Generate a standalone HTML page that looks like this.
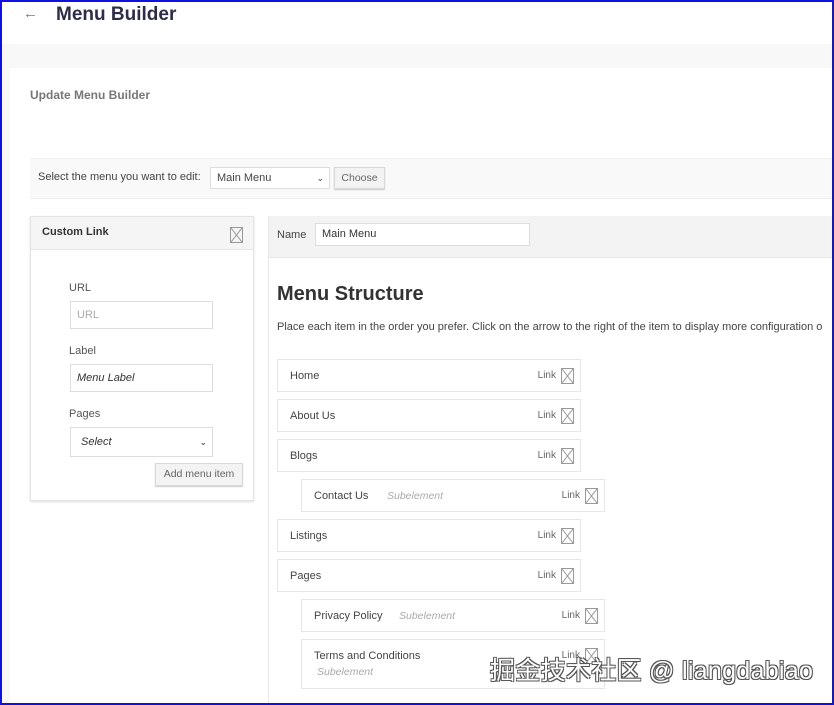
<!DOCTYPE html>
<html><head><meta charset="utf-8"><style>
*{box-sizing:border-box;margin:0;padding:0}
body{width:834px;height:705px;overflow:hidden;background:#fff;font-family:"Liberation Sans",sans-serif;color:#333;position:relative}
.a{position:absolute}
.frame{position:absolute;left:0;top:0;width:834px;height:705px;border:2px solid #1010e0;border-right-color:#1a1aa8;pointer-events:none;z-index:10}
.x{position:absolute;width:13px;height:16px;border:1px solid #999}
.x svg{position:absolute;left:0;top:0}
.item{position:absolute;height:33px;border:1px solid #e6e6e6;background:#fff;font-size:11px;color:#444}
.item .t{position:absolute;left:12px;top:10px}
.item .s{position:absolute;top:10px;font-style:italic;color:#aaa;font-size:10.5px}
.item .l{position:absolute;right:24px;top:10px;font-size:10px;color:#666}
.item .x{right:6px;top:8px}
input,.in{position:absolute;border:1px solid #ddd;background:#fff;font-size:11px;padding-left:6px;line-height:26px}
.btn{position:absolute;border:1px solid #d8d8d8;background:#f3f3f3;font-size:10.5px;color:#666;text-align:center;box-shadow:0 1px 1px #ccc}
</style></head><body>
<div class="frame"></div>
<div class="a" style="left:0;top:44px;width:834px;height:24px;background:#f8f8f8"></div>
<div class="a" style="left:0;top:68px;width:10px;height:637px;background:#f8f8f8"></div>
<div class="a" style="left:23px;top:5px;color:#6b6bd6;font-size:15px;font-weight:bold">&#8592;</div>
<div class="a" style="left:56px;top:4px;font-size:19px;font-weight:bold;color:#2d2d4a">Menu Builder</div>
<div class="a" style="left:30px;top:88px;font-size:12px;font-weight:bold;color:#777">Update Menu Builder</div>

<div class="a" style="left:30px;top:158px;width:804px;height:41px;background:#f9f9f9;border-top:1px solid #eee;border-bottom:1px solid #eee"></div>
<div class="a" style="left:38px;top:171px;font-size:11px;color:#444">Select the menu you want to edit:</div>
<div class="in" style="left:210px;top:167px;width:120px;height:22px;line-height:20px;color:#444">Main Menu<span style="position:absolute;right:5px;font-size:9px">&#8964;</span></div>
<div class="btn" style="left:334px;top:167px;width:51px;height:22px;line-height:20px">Choose</div>

<div class="a" style="left:30px;top:216px;width:224px;height:285px;border:1px solid #e4e4e4;box-shadow:0 1px 2px #ddd"></div>
<div class="a" style="left:31px;top:217px;width:222px;height:33px;background:#f5f5f5;border-bottom:1px solid #e6e6e6"></div>
<div class="a" style="left:42px;top:226px;font-size:11px;font-weight:bold;color:#333">Custom Link</div>
<div class="x" style="left:230px;top:227px"><svg width="11" height="14"><path d="M0 0L11 14M11 0L0 14" stroke="#999" stroke-width="1"/></svg></div>
<div class="a" style="left:69px;top:282px;font-size:11px;color:#555">URL</div>
<div class="in" style="left:70px;top:301px;width:143px;height:28px;color:#aaa">URL</div>
<div class="a" style="left:69px;top:345px;font-size:11px;color:#555">Label</div>
<div class="in" style="left:70px;top:364px;width:143px;height:28px;font-style:italic;color:#333">Menu Label</div>
<div class="a" style="left:69px;top:408px;font-size:11px;color:#555">Pages</div>
<div class="in" style="left:70px;top:427px;width:143px;height:30px;font-style:italic;color:#333;padding-left:10px;line-height:28px">Select<span style="position:absolute;right:5px;font-style:normal;font-size:9px">&#8964;</span></div>
<div class="btn" style="left:155px;top:463px;width:88px;height:23px;line-height:21px">Add menu item</div>

<div class="a" style="left:268px;top:216px;width:566px;height:489px;border-left:1px solid #e8e8e8"></div>
<div class="a" style="left:269px;top:216px;width:565px;height:42px;background:#f3f3f3;border-bottom:1px solid #e6e6e6"></div>
<div class="a" style="left:277px;top:229px;font-size:11px;color:#444">Name</div>
<div class="in" style="left:315px;top:223px;width:215px;height:23px;line-height:21px;color:#333">Main Menu</div>
<div class="a" style="left:277px;top:283px;font-size:20px;font-weight:bold;color:#333">Menu Structure</div>
<div class="a" style="left:277px;top:321px;font-size:11px;color:#444;white-space:nowrap">Place each item in the order you prefer. Click on the arrow to the right of the item to display more configuration o</div>

<div class="item" style="left:277px;top:359px;width:304px"><span class="t">Home</span><span class="l">Link</span><span class="x"><svg width="11" height="14"><path d="M0 0L11 14M11 0L0 14" stroke="#999"/></svg></span></div>
<div class="item" style="left:277px;top:399px;width:304px"><span class="t">About Us</span><span class="l">Link</span><span class="x"><svg width="11" height="14"><path d="M0 0L11 14M11 0L0 14" stroke="#999"/></svg></span></div>
<div class="item" style="left:277px;top:439px;width:304px"><span class="t">Blogs</span><span class="l">Link</span><span class="x"><svg width="11" height="14"><path d="M0 0L11 14M11 0L0 14" stroke="#999"/></svg></span></div>
<div class="item" style="left:301px;top:479px;width:304px"><span class="t">Contact Us</span><span class="s" style="left:85px">Subelement</span><span class="l">Link</span><span class="x"><svg width="11" height="14"><path d="M0 0L11 14M11 0L0 14" stroke="#999"/></svg></span></div>
<div class="item" style="left:277px;top:519px;width:304px"><span class="t">Listings</span><span class="l">Link</span><span class="x"><svg width="11" height="14"><path d="M0 0L11 14M11 0L0 14" stroke="#999"/></svg></span></div>
<div class="item" style="left:277px;top:559px;width:304px"><span class="t">Pages</span><span class="l">Link</span><span class="x"><svg width="11" height="14"><path d="M0 0L11 14M11 0L0 14" stroke="#999"/></svg></span></div>
<div class="item" style="left:301px;top:599px;width:304px"><span class="t">Privacy Policy</span><span class="s" style="left:97px">Subelement</span><span class="l">Link</span><span class="x"><svg width="11" height="14"><path d="M0 0L11 14M11 0L0 14" stroke="#999"/></svg></span></div>
<div class="item" style="left:301px;top:639px;width:304px;height:50px"><span class="t">Terms and Conditions</span><span class="s" style="left:15px;top:26px">Subelement</span><span class="l">Link</span><span class="x"><svg width="11" height="14"><path d="M0 0L11 14M11 0L0 14" stroke="#999"/></svg></span></div>

<div class="a" style="left:490px;top:651px;font-size:25px;letter-spacing:0.3px;color:#fff;white-space:nowrap;font-family:'Liberation Sans','Noto Sans CJK SC',sans-serif;text-shadow:-1px -1px 0 #555,1px -1px 0 #555,-1px 1px 0 #555,1px 1px 0 #555;z-index:5">掘金技术社区 @ liangdabiao</div>
</body></html>
